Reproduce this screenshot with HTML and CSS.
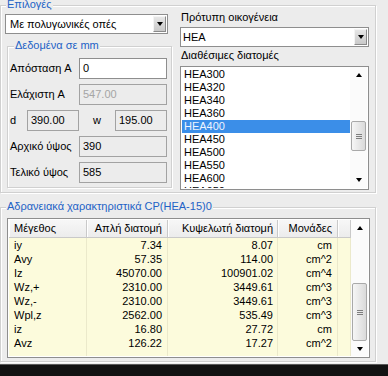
FILE: index.html
```html
<!DOCTYPE html>
<html lang="el">
<head>
<meta charset="utf-8">
<title>Διατομές</title>
<link rel="stylesheet" href="styles.css">
</head>
<body>
<div class="grp grp-top">
  <div class="legend">Επιλογές</div>
  <div class="cols">
    <div class="col-left">
      <div class="combo combo-left">
        <span class="combo-text">Με πολυγωνικές οπές</span>
        <span class="dd"><i class="tri tri-down"></i></span>
      </div>
      <div class="grp grp-data">
        <div class="legend legend-data">Δεδομένα σε mm</div>
        <div class="row first"><span class="lbl">Απόσταση A</span><span class="inp">0</span></div>
        <div class="row"><span class="lbl">Ελάχιστη A</span><span class="inp dis gray">547.00</span></div>
        <div class="row"><span class="lbl lbl-d">d</span><span class="inp dis small">390.00</span><span class="lbl lbl-w">w</span><span class="inp dis small">195.00</span></div>
        <div class="row"><span class="lbl">Αρχικό ύψος</span><span class="inp dis">390</span></div>
        <div class="row"><span class="lbl">Τελικό ύψος</span><span class="inp dis">585</span></div>
      </div>
    </div>
    <div class="col-right">
      <div class="lbl-r">Πρότυπη οικογένεια</div>
      <div class="combo combo-right">
        <span class="combo-text">HEA</span>
        <span class="dd"><i class="tri tri-down"></i></span>
      </div>
      <div class="lbl-r lbl-r2">Διαθέσιμες διατομές</div>
      <div class="listbox">
        <div class="items">
          <div class="item">HEA300</div>
          <div class="item">HEA320</div>
          <div class="item">HEA340</div>
          <div class="item">HEA360</div>
          <div class="item sel">HEA400</div>
          <div class="item">HEA450</div>
          <div class="item">HEA500</div>
          <div class="item">HEA550</div>
          <div class="item">HEA600</div>
          <div class="item">HEA650</div>
        </div>
        <div class="vscroll">
          <div class="sb-btn"><i class="tri tri-up"></i></div>
          <div class="sb-track"><div class="thumb thumb-list"><i class="grip"></i></div></div>
          <div class="sb-btn"><i class="tri tri-down"></i></div>
        </div>
      </div>
    </div>
  </div>
</div>

<div class="grp grp-bottom">
  <div class="legend">Αδρανειακά χαρακτηριστικά CP(HEA-15)0</div>
  <div class="lv">
    <div class="lv-grid">
      <div class="lv-head">
        <div class="th c1">Μέγεθος</div>
        <div class="th c2">Απλή διατομή</div>
        <div class="th c3">Κυψελωτή διατομή</div>
        <div class="th c4">Μονάδες</div>
        <div class="th c5"></div>
      </div>
      <div class="lv-body">
        <div class="tr"><div class="td c1">iy</div><div class="td c2">7.34</div><div class="td c3">8.07</div><div class="td c4">cm</div><div class="td c5"></div></div>
        <div class="tr"><div class="td c1">Avy</div><div class="td c2">57.35</div><div class="td c3">114.00</div><div class="td c4">cm^2</div><div class="td c5"></div></div>
        <div class="tr"><div class="td c1">Iz</div><div class="td c2">45070.00</div><div class="td c3">100901.02</div><div class="td c4">cm^4</div><div class="td c5"></div></div>
        <div class="tr"><div class="td c1">Wz,+</div><div class="td c2">2310.00</div><div class="td c3">3449.61</div><div class="td c4">cm^3</div><div class="td c5"></div></div>
        <div class="tr"><div class="td c1">Wz,-</div><div class="td c2">2310.00</div><div class="td c3">3449.61</div><div class="td c4">cm^3</div><div class="td c5"></div></div>
        <div class="tr"><div class="td c1">Wpl,z</div><div class="td c2">2562.00</div><div class="td c3">535.49</div><div class="td c4">cm^3</div><div class="td c5"></div></div>
        <div class="tr"><div class="td c1">iz</div><div class="td c2">16.80</div><div class="td c3">27.72</div><div class="td c4">cm</div><div class="td c5"></div></div>
        <div class="tr"><div class="td c1">Avz</div><div class="td c2">126.22</div><div class="td c3">17.27</div><div class="td c4">cm^2</div><div class="td c5"></div></div>
        <div class="tr tr-fill"><div class="td c1"></div><div class="td c2"></div><div class="td c3"></div><div class="td c4"></div><div class="td c5"></div></div>
      </div>
    </div>
    <div class="vscroll vscroll-lv">
      <div class="sb-btn"><i class="tri tri-up"></i></div>
      <div class="sb-track"><div class="thumb thumb-lv"><i class="grip"></i></div></div>
      <div class="sb-btn sb-btn-low"><i class="tri tri-down"></i></div>
    </div>
  </div>
</div>

<div class="taskbar"></div>
</body>
</html>
```

FILE: styles.css
```css
* { box-sizing: border-box; }

body {
  margin: 0;
  width: 388px;
  height: 376px;
  overflow: hidden;
  background: #ececec;
  font-family: "Liberation Sans", Arial, sans-serif;
  font-size: 11px;
  line-height: 13px;
  color: #000;
}

/* group boxes */
.grp {
  border: 1px solid #d0d0d0;
  box-shadow: inset 1px 1px 0 #fff, 1px 1px 0 #fff;
}

.legend {
  height: 13px;
  margin-top: -8px;
  width: max-content;
  background: #ececec;
  color: #2262c6;
  padding: 0 1px;
  margin-left: 1px;
}

.grp-top {
  margin-top: 5px;
  width: 376px;
  height: 188px;
  padding-left: 4px;
}

.cols {
  display: flex;
  gap: 8px;
}

.col-left { width: 167px; }
.col-right { width: 189px; }

/* combo boxes */
.combo {
  height: 20px;
  border: 1px solid #8e8e8e;
  background: #fff;
  display: flex;
  align-items: center;
}

.combo-left {
  margin-top: 3px;
  width: 163px;
  padding-left: 4px;
}

.combo-right {
  margin-top: 3px;
  padding-left: 2px;
}

.dd {
  margin-left: auto;
  margin-right: 1px;
  width: 13px;
  height: 16px;
  background: linear-gradient(#e6e6e6, #c9c9c9);
  border: 1px solid;
  border-color: #f4f4f4 #8a8a8a #8a8a8a #f4f4f4;
  display: flex;
  align-items: center;
  justify-content: center;
}

.tri {
  display: block;
  width: 0;
  height: 0;
  border-left: 3.5px solid transparent;
  border-right: 3.5px solid transparent;
}
.tri-down { border-top: 4px solid #000; }
.tri-up { border-bottom: 4px solid #000; }

/* data group */
.grp-data {
  margin: 12px 0 0 2px;
  width: 165px;
  padding: 0 4px 4px 2px;
}

.legend-data { margin-left: 4px; }

.row {
  display: flex;
  align-items: center;
  height: 21px;
  margin-top: 5px;
}
.row.first { margin-top: 6px; }

.lbl { width: 69px; white-space: nowrap; }
.lbl-d { width: 17px; }
.lbl-w { width: 36px; text-align: center; }

.inp {
  width: 88px;
  height: 21px;
  border: 1px solid #8e8e8e;
  background: #fff;
  padding-left: 3px;
  line-height: 19px;
}
.inp.dis { background: #ececec; border-color: #a2a2a2; }
.inp.gray { color: #a5a5a5; }
.inp.small { width: 52px; }

/* right column */
.lbl-r { height: 13px; padding-left: 1px; }
.lbl-r2 { margin-top: 2px; }

.listbox {
  margin-top: 4px;
  height: 124px;
  border: 1px solid #8e8e8e;
  background: #fff;
  padding: 0 1px 1px 1px;
  display: flex;
}

.items {
  flex: 1;
  overflow: hidden;
  padding-top: 1px;
}

.item {
  height: 13px;
  line-height: 12px;
  padding-left: 2px;
}
.item.sel {
  background: #3b8ee8;
  color: #eef4ff;
}

/* scrollbars */
.vscroll {
  width: 17px;
  display: flex;
  flex-direction: column;
  background: #fbfbfb;
}

.sb-btn {
  height: 16px;
  display: flex;
  align-items: center;
  justify-content: center;
  flex: none;
}
.sb-btn-low { height: 15px; }

.sb-track { flex: 1; }

.thumb {
  margin: 0 1px;
  border: 1px solid #a9a9a9;
  border-radius: 2px;
  background: linear-gradient(to right, #f6f6f6, #dadada);
  display: flex;
  align-items: center;
  justify-content: center;
}
.thumb-list { margin-top: 38px; height: 30px; }
.thumb-lv { margin-top: 47px; height: 58px; }

.grip {
  display: block;
  width: 6px;
  height: 5px;
  background: repeating-linear-gradient(#7e7e7e 0 1px, transparent 1px 2px);
}

/* bottom group */
.grp-bottom {
  margin-top: 14px;
  width: 376px;
  height: 155px;
  padding-left: 6px;
}
.grp-bottom .legend { margin-left: -1px; }

.lv {
  margin-top: 5px;
  width: 363px;
  height: 140px;
  border: 1px solid #8e8e8e;
  padding: 1px;
  background: #fff;
  display: flex;
}

.lv-grid {
  width: 342px;
  display: flex;
  flex-direction: column;
}

.lv-head, .tr {
  display: grid;
  grid-template-columns: 78px 81px 110px 60px 13px;
}

.th {
  height: 18px;
  line-height: 17px;
  background: linear-gradient(#f7f7f7, #ececec);
  border-right: 1px solid #c9c9c9;
  border-bottom: 1px solid #c9c9c9;
  box-shadow: inset 1px 0 0 #fff;
  padding: 0 5px;
  white-space: nowrap;
  overflow: hidden;
}

.lv-body {
  flex: 1;
  background: #fcfbdc;
  overflow: hidden;
}

.td {
  height: 14px;
  line-height: 14px;
  border-right: 1px solid #ebe9cb;
  padding: 0 5px;
  white-space: nowrap;
}

.c2, .c3, .c4 { text-align: right; }
.c3.td, .c3.th { padding-right: 4px; }

.taskbar {
  margin-top: 2px;
  height: 12px;
  background: #121212;
  border-top: 1px solid #5a5a5a;
}
```
